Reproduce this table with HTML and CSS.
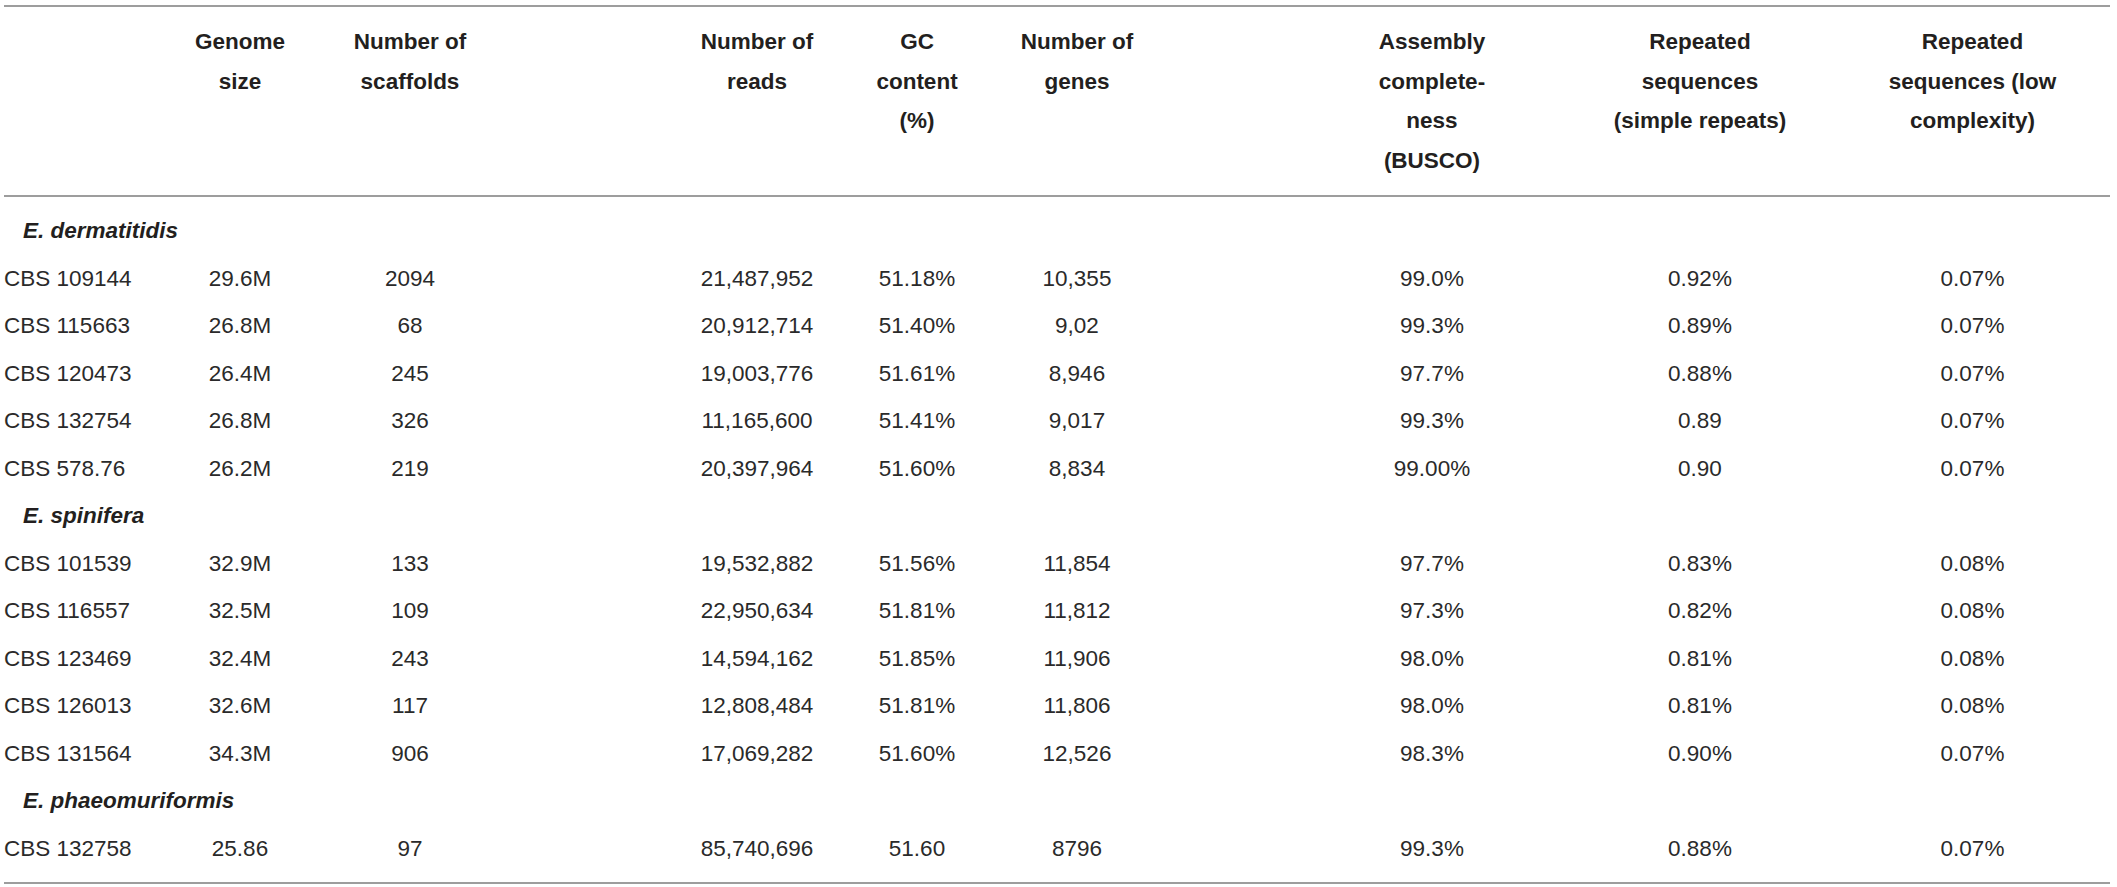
FILE: index.html
```html
<!DOCTYPE html>
<html>
<head>
    <title>Genome assembly statistics</title>
    <link rel="stylesheet" href="styles.css">
</head>
<body>
    <table class="stats">
        <colgroup>
            <col class="c-name">
            <col class="c-size">
            <col class="c-scaf">
            <col class="c-reads">
            <col class="c-gc">
            <col class="c-genes">
            <col class="c-busco">
            <col class="c-simple">
            <col class="c-low">
        </colgroup>
        <thead>
            <tr>
                <th></th>
                <th>Genome<br>size</th>
                <th>Number of<br>scaffolds</th>
                <th>Number of<br>reads</th>
                <th>GC<br>content<br>(%)</th>
                <th>Number of<br>genes</th>
                <th>Assembly<br>complete-<br>ness<br>(BUSCO)</th>
                <th>Repeated<br>sequences<br>(simple repeats)</th>
                <th>Repeated<br>sequences (low<br>complexity)</th>
            </tr>
        </thead>
        <tbody>
            <tr class="group"><td colspan="9">E. dermatitidis</td></tr>
            <tr><td>CBS 109144</td><td>29.6M</td><td>2094</td><td>21,487,952</td><td>51.18%</td><td>10,355</td><td>99.0%</td><td>0.92%</td><td>0.07%</td></tr>
            <tr><td>CBS 115663</td><td>26.8M</td><td>68</td><td>20,912,714</td><td>51.40%</td><td>9,02</td><td>99.3%</td><td>0.89%</td><td>0.07%</td></tr>
            <tr><td>CBS 120473</td><td>26.4M</td><td>245</td><td>19,003,776</td><td>51.61%</td><td>8,946</td><td>97.7%</td><td>0.88%</td><td>0.07%</td></tr>
            <tr><td>CBS 132754</td><td>26.8M</td><td>326</td><td>11,165,600</td><td>51.41%</td><td>9,017</td><td>99.3%</td><td>0.89</td><td>0.07%</td></tr>
            <tr><td>CBS 578.76</td><td>26.2M</td><td>219</td><td>20,397,964</td><td>51.60%</td><td>8,834</td><td>99.00%</td><td>0.90</td><td>0.07%</td></tr>
            <tr class="group"><td colspan="9">E. spinifera</td></tr>
            <tr><td>CBS 101539</td><td>32.9M</td><td>133</td><td>19,532,882</td><td>51.56%</td><td>11,854</td><td>97.7%</td><td>0.83%</td><td>0.08%</td></tr>
            <tr><td>CBS 116557</td><td>32.5M</td><td>109</td><td>22,950,634</td><td>51.81%</td><td>11,812</td><td>97.3%</td><td>0.82%</td><td>0.08%</td></tr>
            <tr><td>CBS 123469</td><td>32.4M</td><td>243</td><td>14,594,162</td><td>51.85%</td><td>11,906</td><td>98.0%</td><td>0.81%</td><td>0.08%</td></tr>
            <tr><td>CBS 126013</td><td>32.6M</td><td>117</td><td>12,808,484</td><td>51.81%</td><td>11,806</td><td>98.0%</td><td>0.81%</td><td>0.08%</td></tr>
            <tr><td>CBS 131564</td><td>34.3M</td><td>906</td><td>17,069,282</td><td>51.60%</td><td>12,526</td><td>98.3%</td><td>0.90%</td><td>0.07%</td></tr>
            <tr class="group"><td colspan="9">E. phaeomuriformis</td></tr>
            <tr><td>CBS 132758</td><td>25.86</td><td>97</td><td>85,740,696</td><td>51.60</td><td>8796</td><td>99.3%</td><td>0.88%</td><td>0.07%</td></tr>
        </tbody>
    </table>
</body>
</html>
```

FILE: styles.css
```css
body {
    margin: 0;
    padding: 5px 7px 0 4px;
    background: #fff;
    color: #231f20;
    font-family: "Liberation Sans", Arial, sans-serif;
}

.stats {
    width: 2106px;
    table-layout: fixed;
    border-collapse: collapse;
}

/* column widths, picked so the centred text lands where it does in the print */
.c-name { width: 156px; }
.c-size { width: 165px; }
.c-scaf { width: 259px; }
.c-reads { width: 253px; }
.c-gc { width: 160px; }
.c-genes { width: 258px; }
.c-busco { width: 310px; }
.c-simple { width: 270px; }
.c-low { width: 275px; }

.stats thead tr {
    border-top: 2px solid #9d9d9d;
    border-bottom: 2px solid #9d9d9d;
}

.stats th {
    padding: 15px 0;
    font-size: 22.5px;
    font-weight: bold;
    line-height: 39.5px;
    text-align: center;
    vertical-align: top;
    white-space: nowrap;
}

.stats td {
    padding: 0;
    font-size: 22.5px;
    line-height: 47.5px;
    text-align: center;
    white-space: nowrap;
    color: #2a2a2a;
}

.stats td:first-child {
    text-align: left;
}

/* shift some columns off their cell centre */
.stats th:nth-child(2), .stats td:nth-child(2) { padding-right: 5px; }
.stats th:nth-child(3), .stats td:nth-child(3) { padding-right: 89px; }
.stats th:nth-child(4), .stats td:nth-child(4) { padding-left: 93px; }
.stats th:nth-child(6), .stats td:nth-child(6) { padding-right: 98px; }
.stats th:nth-child(7), .stats td:nth-child(7) { padding-left: 44px; }

.stats tbody {
    border-bottom: 2px solid #9d9d9d;
}

.stats tbody tr:first-child td {
    padding-top: 10px;
}

.stats tbody tr:last-child td {
    padding-bottom: 10px;
}

.stats .group td {
    padding-left: 19px;
    font-weight: bold;
    font-style: italic;
    color: #231f20;
}
```
